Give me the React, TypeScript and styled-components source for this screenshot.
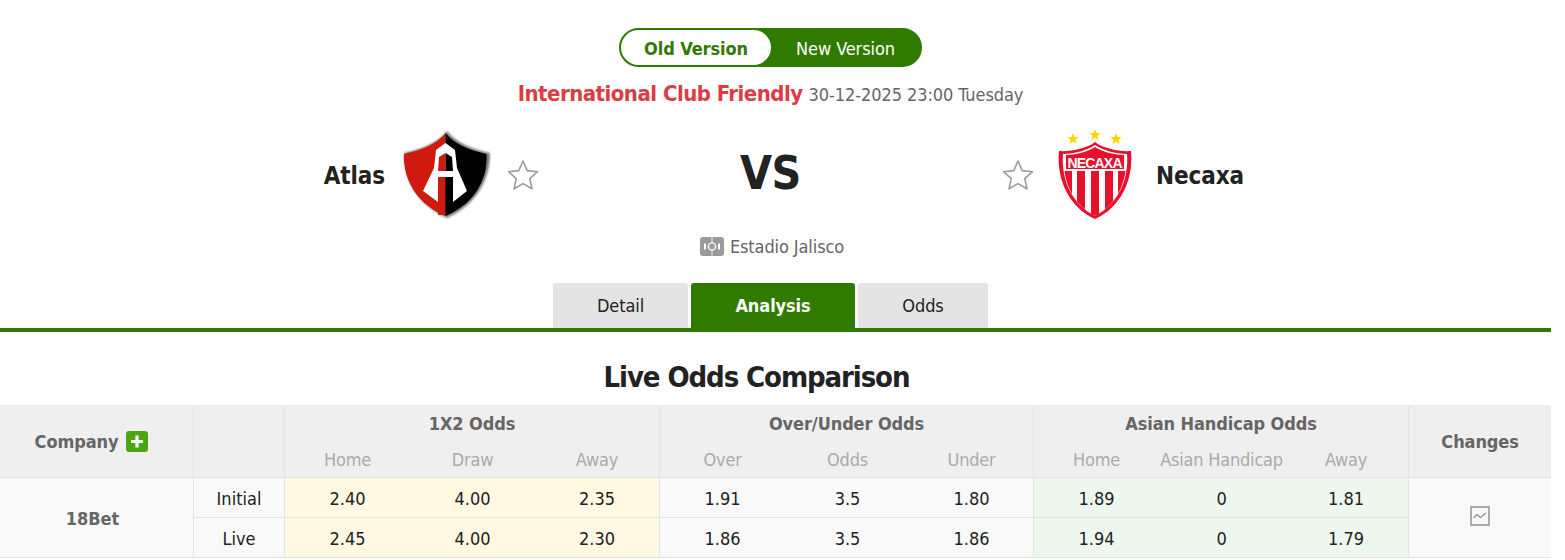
import React from "react";
import styled, { createGlobalStyle } from "styled-components";

const Global = createGlobalStyle`
  html, body { margin: 0; padding: 0; background: #fff; }
  body { width: 1551px; font-family: "DejaVu Sans Condensed", "DejaVu Sans", "Liberation Sans", sans-serif; color: #222; }
`;
const Page = styled.div`width: 1551px;`;
const Header = styled.header`width: 1541px; display: flex; flex-direction: column; align-items: center; padding-top: 28px;`;
const Toggle = styled.div`display: flex; width: 303px; height: 39px; box-sizing: border-box; border-radius: 20px; background: #317a00; border: 2px solid #317a00;`;
const ToggleItem = styled.div<{ $on?: boolean }>`
  flex: ${p => (p.$on ? "0 0 150px" : "1")}; display: flex; align-items: center; justify-content: center; padding-top: 1px;
  border-radius: 18px; font-size: 18px; font-weight: ${p => (p.$on ? 700 : 400)}; letter-spacing: -0.1px;
  background: ${p => (p.$on ? "#fff" : "transparent")}; color: ${p => (p.$on ? "#317a00" : "#fff")};
`;
const Title = styled.div`margin-top: 13px; height: 27px; display: flex; align-items: baseline; gap: 6px; line-height: 27px;`;
const League = styled.span`font-size: 22px; font-weight: 700; color: #dc3c42; letter-spacing: -0.52px;`;
const When = styled.span`font-size: 18px; color: #666; letter-spacing: -0.08px;`;
const Teams = styled.div`margin-top: 18px; width: 100%; height: 100px; display: grid; grid-template-columns: 1fr 463px 1fr; align-items: center;`;
const Side = styled.div<{ $right?: boolean }>`display: flex; align-items: center; gap: 16px; justify-content: ${p => (p.$right ? "flex-start" : "flex-end")};`;
const TeamName = styled.div`font-size: 24px; font-weight: 700; color: #222; letter-spacing: -0.1px; padding-top: 2px;`;
const Vs = styled.div`text-align: center; font-size: 46px; font-weight: 700; color: #222; line-height: 60px; margin-top: -4px; letter-spacing: -0.5px;`;
const Venue = styled.div`margin-top: 8px; height: 26px; padding-left: 3px; display: flex; align-items: center; gap: 6px; font-size: 18px; color: #666; letter-spacing: -0.1px;`;
const Tabs = styled.nav`margin-top: 24px; display: flex; gap: 3px; height: 45px;`;
const Tab = styled.div<{ $w: number; $on?: boolean }>`
  width: ${p => p.$w}px; display: flex; align-items: center; justify-content: center; font-size: 18px; border-radius: 3px 3px 0 0; letter-spacing: -0.1px;
  background: ${p => (p.$on ? "#317a00" : "#e4e4e4")}; color: ${p => (p.$on ? "#fff" : "#222")}; font-weight: ${p => (p.$on ? 700 : 400)};
`;
const Rule = styled.div`height: 4px; background: #317a00;`;
const Heading = styled.h2`margin: 0; padding: 25px 38px 0 0; height: 48px; text-align: center; font-size: 29px; line-height: 40px; font-weight: 700; color: #222; letter-spacing: -1.1px;`;
const Table = styled.table`width: 1551px; table-layout: fixed; border-collapse: separate; border-spacing: 0; font-size: 18px;`;
const Th = styled.th<{ $last?: boolean }>`
  background: #efefef; color: #666; font-size: 18px; font-weight: 700; padding: 0; height: 36px; white-space: nowrap; letter-spacing: -0.1px;
  border-right: ${p => (p.$last ? "0" : "1px solid #e4e4e4")};
`;
const Sub = styled.th<{ $end?: boolean }>`
  background: #efefef; color: #aaa; font-size: 18px; font-weight: 400; padding: 0; height: 36px; border-bottom: 1px solid #e4e4e4; white-space: nowrap; letter-spacing: -0.2px;
  border-right: ${p => (p.$end ? "1px solid #e4e4e4" : "0")};
`;
const TallTh = styled(Th)`border-bottom: 1px solid #e4e4e4;`;
const Cell = styled.td<{ $bg?: string; $end?: boolean }>`
  box-sizing: border-box; background: ${p => p.$bg || "#f9f9f9"}; text-align: center; padding: 2px 0 0; height: 40px; color: #222; font-size: 18px;
  border-bottom: 1px solid #e4e4e4; border-right: ${p => (p.$end ? "1px solid #e4e4e4" : "0")};
`;
const CompanyCell = styled(Cell)`font-weight: 700; color: #666; padding-right: 8px;`;
const CompanyLabel = styled.span`display: inline-flex; align-items: center; gap: 8px; margin-right: 10px;`;
const Chart = styled.span`display: inline-flex; vertical-align: middle; margin-bottom: 6px;`;

const Star = () => (
  <svg width="32" height="32" viewBox="0 0 32 32">
    <path d="M16 2 L20.2 11.6 L30.5 12.7 L22.8 19.6 L25 29.8 L16 24.6 L7 29.8 L9.2 19.6 L1.5 12.7 L11.8 11.6 Z" fill="#fff" stroke="#9b9b9b" strokeWidth="1.6" strokeLinejoin="round" />
  </svg>
);

const AtlasLogo = () => (
  <svg width="90" height="90" viewBox="0 0 90 90">
    <defs>
      <filter id="sh" x="-10%" y="-10%" width="120%" height="120%"><feGaussianBlur stdDeviation="1.2" /></filter>
    </defs>
    <path transform="translate(1 0)" d="M45 1 C52 11 68 19 88 23 C88 52 72 76 45 88 C18 76 2 52 2 23 C22 19 38 11 45 1 Z" fill="#777" filter="url(#sh)" />
    <path d="M44.5 3 V86 C18 75 2 52 3 24 C22 20 37 13 44.5 3 Z" fill="#cf1a10" />
    <path d="M44.5 3 V86 C71 75 87 52 85.5 24 C67 20 52 13 44.5 3 Z" fill="#000" />
    <path d="M44.5 13 L54 20 L56 38 L66 61 L52 72 V48 H37 V72 L22 61 L33 38 L35 20 Z" fill="#fff" />
    <path d="M44.5 23 L38 27 L37 41 H44.5 Z" fill="#cf1a10" />
    <path d="M44.5 23 L51 27 L52 41 H44.5 Z" fill="#000" />
    <path d="M37 47 H44.5 V85 H37 Z" fill="#cf1a10" />
    <path d="M44.5 47 H52 V74 L44.5 85 Z" fill="#000" />
  </svg>
);

const NecaxaLogo = () => (
  <svg width="90" height="90" viewBox="0 0 90 90">
    <defs>
      <clipPath id="nx"><path d="M45 15 C52 20 66 24 76 24 C78 50 68 74 45 86 C22 74 12 50 14 24 C24 24 38 20 45 15 Z" /></clipPath>
    </defs>
    <g fill="#ffd500">
      <path d="M23 3 L24.5 7 L28.8 7.2 L25.4 9.8 L26.6 14 L23 11.6 L19.4 14 L20.6 9.8 L17.2 7.2 L21.5 7 Z" />
      <path d="M45 -1 L46.5 3 L50.8 3.2 L47.4 5.8 L48.6 10 L45 7.6 L41.4 10 L42.6 5.8 L39.2 3.2 L43.5 3 Z" />
      <path d="M66 3 L67.5 7 L71.8 7.2 L68.4 9.8 L69.6 14 L66 11.6 L62.4 14 L63.6 9.8 L60.2 7.2 L64.5 7 Z" />
    </g>
    <path d="M45 12 C52 18 70 22 81 21 C84 50 70 78 45 89 C20 78 6 50 9 21 C20 22 38 18 45 12 Z" fill="#e8112d" />
    <path d="M45 15 C52 20 66 24 77 24 C79 50 68 74 45 86 C22 74 11 50 13 24 C24 24 38 20 45 15 Z" fill="#fff" />
    <g clipPath="url(#nx)" fill="#e8112d">
      <rect x="14" y="41" width="8" height="50" />
      <rect x="27" y="41" width="8" height="50" />
      <rect x="41" y="41" width="8" height="50" />
      <rect x="55" y="41" width="8" height="50" />
      <rect x="68" y="41" width="8" height="50" />
      <path d="M45 17 C52 22 66 25 74 25 V39 H16 V25 C24 25 38 22 45 17 Z" />
    </g>
    <text x="45" y="37.5" textAnchor="middle" fontSize="14" fontWeight="700" fill="#fff" fontFamily="'Liberation Sans', sans-serif" textLength="55">NECAXA</text>
  </svg>
);

const VenueIcon = () => (
  <svg width="24" height="19" viewBox="0 0 24 19">
    <rect width="24" height="19" rx="3" fill="#9a9a9a" />
    <rect x="11.5" width="1" height="19" fill="#e8e8e8" />
    <circle cx="12" cy="9.5" r="3.6" fill="#9a9a9a" stroke="#fff" strokeWidth="1.4" />
    <rect x="4" y="6.5" width="2" height="6" fill="#fff" />
    <rect x="18" y="6.5" width="2" height="6" fill="#fff" />
  </svg>
);

const PlusIcon = () => (
  <svg width="22" height="21" viewBox="0 0 22 21">
    <rect width="22" height="21" rx="3" fill="#4ca614" />
    <path d="M11 4.5 V16.5 M5 10.5 H17" stroke="#fff" strokeWidth="3.2" />
  </svg>
);

const ChartIcon = () => (
  <svg width="20" height="20" viewBox="0 0 20 20">
    <rect x="1" y="1" width="18" height="18" fill="none" stroke="#999" strokeWidth="1.6" />
    <path d="M3.5 12 L7 8.5 L10.5 11.5 L16 7" fill="none" stroke="#888" strokeWidth="1.1" />
  </svg>
);

const Yellow = "#fff9e3";
const Green = "#eef7ee";
const Row = ({ vals }: { vals: string[] }) => (
  <>
    {vals.map((v, i) => (
      <Cell key={i} $bg={i < 3 ? Yellow : i >= 6 ? Green : "#f9f9f9"} $end={i % 3 === 2}>{v}</Cell>
    ))}
  </>
);

export default function App() {
  return (
    <Page>
      <Global />
      <Header>
        <Toggle>
          <ToggleItem $on>Old Version</ToggleItem>
          <ToggleItem>New Version</ToggleItem>
        </Toggle>
        <Title><League>International Club Friendly</League><When>30-12-2025 23:00 Tuesday</When></Title>
        <Teams>
          <Side><TeamName>Atlas</TeamName><AtlasLogo /><Star /></Side>
          <Vs>VS</Vs>
          <Side $right><Star /><NecaxaLogo /><TeamName>Necaxa</TeamName></Side>
        </Teams>
        <Venue><VenueIcon />Estadio Jalisco</Venue>
        <Tabs>
          <Tab $w={135}>Detail</Tab>
          <Tab $w={164} $on>Analysis</Tab>
          <Tab $w={130}>Odds</Tab>
        </Tabs>
      </Header>
      <Rule />
      <Heading>Live Odds Comparison</Heading>
      <Table>
        <colgroup>
          <col style={{ width: 194 }} /><col style={{ width: 91 }} />
          <col style={{ width: 125 }} /><col style={{ width: 125 }} /><col style={{ width: 125 }} />
          <col style={{ width: 125 }} /><col style={{ width: 125 }} /><col style={{ width: 124 }} />
          <col style={{ width: 125 }} /><col style={{ width: 125 }} /><col style={{ width: 125 }} />
          <col style={{ width: 142 }} />
        </colgroup>
        <thead>
          <tr>
            <TallTh rowSpan={2}><CompanyLabel>Company <PlusIcon /></CompanyLabel></TallTh>
            <TallTh rowSpan={2} />
            <Th colSpan={3}>1X2 Odds</Th>
            <Th colSpan={3}>Over/Under Odds</Th>
            <Th colSpan={3}>Asian Handicap Odds</Th>
            <TallTh rowSpan={2} $last>Changes</TallTh>
          </tr>
          <tr>
            <Sub>Home</Sub><Sub>Draw</Sub><Sub $end>Away</Sub>
            <Sub>Over</Sub><Sub>Odds</Sub><Sub $end>Under</Sub>
            <Sub>Home</Sub><Sub>Asian Handicap</Sub><Sub $end>Away</Sub>
          </tr>
        </thead>
        <tbody>
          <tr>
            <CompanyCell rowSpan={2} $end>18Bet</CompanyCell>
            <Cell $end>Initial</Cell>
            <Row vals={["2.40","4.00","2.35","1.91","3.5","1.80","1.89","0","1.81"]} />
            <Cell rowSpan={2}><Chart><ChartIcon /></Chart></Cell>
          </tr>
          <tr>
            <Cell $end>Live</Cell>
            <Row vals={["2.45","4.00","2.30","1.86","3.5","1.86","1.94","0","1.79"]} />
          </tr>
        </tbody>
      </Table>
    </Page>
  );
}
